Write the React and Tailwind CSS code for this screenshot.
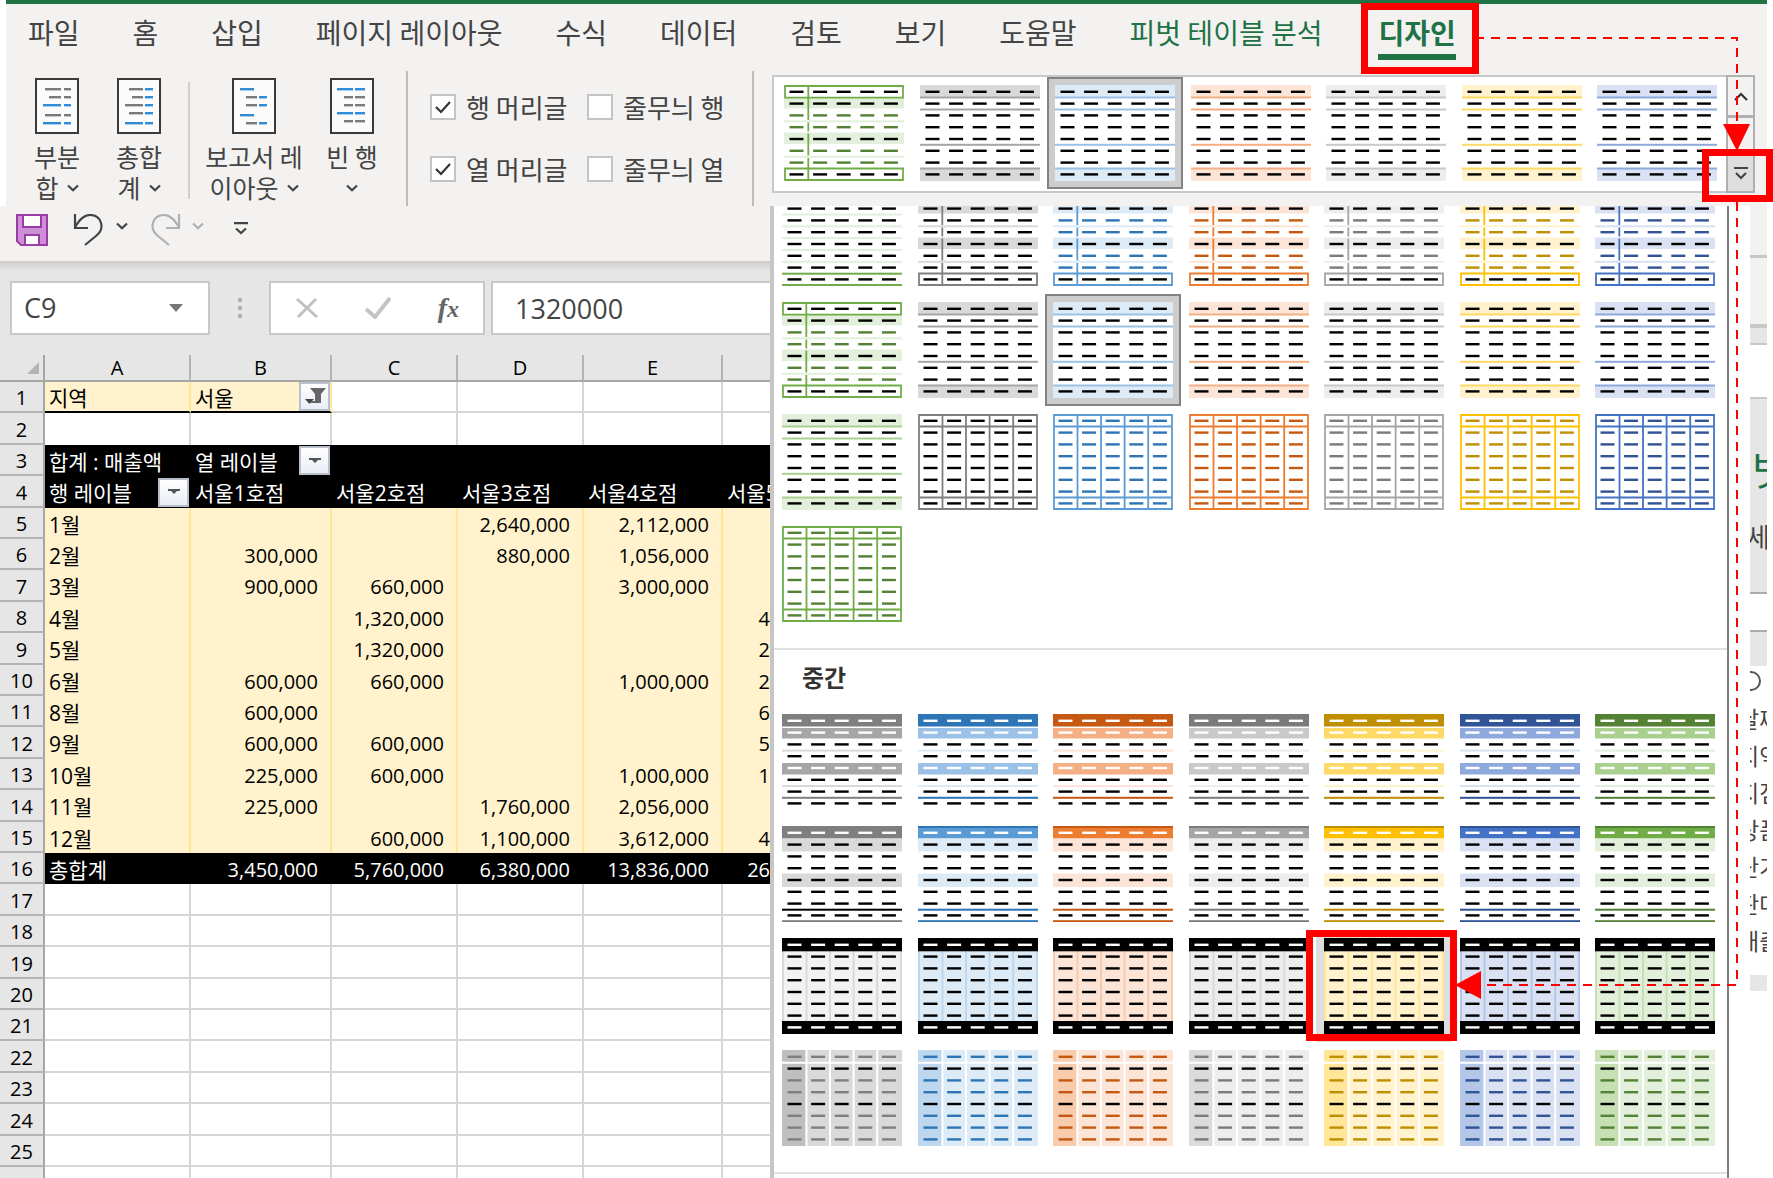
import { useState } from "react";

const palettes = {
  black: { dark: "#7f7f7f", strong: "#7f7f7f", mid: "#a6a6a6", soft: "#bfbfbf", pale: "#d9d9d9", text: "#000000" },
  blue: { dark: "#2e75b6", strong: "#5b9bd5", mid: "#9bc2e6", soft: "#bdd7ee", pale: "#ddebf7" },
  orange: { dark: "#c65911", strong: "#ed7d31", mid: "#f4b084", soft: "#f8cbad", pale: "#fce4d6" },
  gray: { dark: "#7b7b7b", strong: "#a5a5a5", mid: "#c9c9c9", soft: "#dbdbdb", pale: "#ededed" },
  yellow: { dark: "#bf8f00", strong: "#ffc000", mid: "#ffd966", soft: "#ffe699", pale: "#fff2cc" },
  navy: { dark: "#305496", strong: "#4472c4", mid: "#8ea9db", soft: "#b4c6e7", pale: "#d9e1f2" },
  green: { dark: "#548235", strong: "#70ad47", mid: "#a9d08e", soft: "#c6e0b4", pale: "#e2efda" },
};

const colorOrder = ["black", "blue", "orange", "gray", "yellow", "navy"];
const rowOf = (kind, colors) => colors.map((color) => ({ kind, color }));

const ribbonStyles = [{ kind: "outline", color: "green" }, ...rowOf("band", colorOrder)];

const lightRows = [
  [{ kind: "lines", color: "green" }, ...rowOf("outline", colorOrder)],
  ribbonStyles,
  [{ kind: "band", color: "green" }, ...rowOf("grid", colorOrder)],
  [{ kind: "grid", color: "green" }],
];

const mediumRows = ["header", "stripe", "block", "cells"].map((kind) =>
  rowOf(kind, [...colorOrder, "green"])
);

const tabs = ["파일", "홈", "삽입", "페이지 레이아웃", "수식", "데이터", "검토", "보기", "도움말"];

const columns = ["A", "B", "C", "D", "E", ""];

const sheet = [
  ["지역", "서울", "", "", "", ""],
  ["", "", "", "", "", ""],
  ["합계 : 매출액", "열 레이블", "", "", "", ""],
  ["행 레이블", "서울1호점", "서울2호점", "서울3호점", "서울4호점", "서울5호점"],
  ["1월", "", "", "2,640,000", "2,112,000", ""],
  ["2월", "300,000", "", "880,000", "1,056,000", ""],
  ["3월", "900,000", "660,000", "", "3,000,000", ""],
  ["4월", "", "1,320,000", "", "", "4"],
  ["5월", "", "1,320,000", "", "", "2"],
  ["6월", "600,000", "660,000", "", "1,000,000", "2"],
  ["8월", "600,000", "", "", "", "6"],
  ["9월", "600,000", "600,000", "", "", "5"],
  ["10월", "225,000", "600,000", "", "1,000,000", "1"],
  ["11월", "225,000", "", "1,760,000", "2,056,000", ""],
  ["12월", "", "600,000", "1,100,000", "3,612,000", "4"],
  ["총합계", "3,450,000", "5,760,000", "6,380,000", "13,836,000", "26"],
  ...Array.from({ length: 10 }, () => ["", "", "", "", "", ""]),
];

const fields = ["날짜", "지역", "지점", "상품", "단가", "판매", "매출"];

const cols = [0, 1, 2, 3, 4];
const rows = [0, 1, 2, 3, 4, 5, 6, 7];

const dashColor = (kind, row, p) => {
  const dark = p.text || p.dark;
  if (kind === "outline") return [2, 3, 5, 6].includes(row) ? dark : "#000000";
  if (kind === "grid") return dark;
  if (kind === "header") return [0, 1, 4].includes(row) ? "#ffffff" : "#000000";
  if (kind === "stripe") return row === 0 ? "#ffffff" : "#000000";
  if (kind === "block") return row === 0 || row === 7 ? "#ffffff" : "#000000";
  if (kind === "cells") return row === 1 || row === 4 ? "#000000" : p.dark;
  return "#000000";
};

const StyleBackground = ({ kind, color, p }) => {
  const line = (y, fill) => <rect key={`l${y}`} x="0" y={y - 1} width="120" height="2" fill={fill} />;
  const fillRow = (y, h, fill) => <rect key={`f${y}`} x="0" y={y} width="120" height={h} fill={fill} />;

  if (kind === "lines") {
    return <>{[12.5, 24.5, 36.3, 48, 60, 71.8].map((y) => line(y, p.pale))}{[1, 83.7, 95].map((y) => line(y, p.strong))}</>;
  }
  if (kind === "outline") {
    return (
      <>
        {fillRow(13, 10.5, p.pale)}
        {fillRow(47.5, 11.5, p.pale)}
        {line(36.3, p.pale)}
        {line(71.8, p.pale)}
        <path d="M24.3 1V35M24.3 37.5V46.5M24.3 48.5V70.5M24.3 73V95" stroke={p.strong} strokeWidth="1.8" />
        <path d="M1 1H119V12.7H1ZM1 83.5H119V95H1Z" fill="none" stroke={p.strong} strokeWidth="1.8" />
      </>
    );
  }
  if (kind === "band") {
    return (
      <>
        {fillRow(0, 12, p.pale)}
        {fillRow(84, 12, p.pale)}
        {[12.5, 24.5, 59.8, 83.5].map((y) => line(y, p.mid))}
      </>
    );
  }
  if (kind === "grid") {
    return (
      <path
        d="M1 1H119V95H1ZM1 12.5H119M1 83.5H119M24.5 1V95M48 1V95M71.6 1V95M95.2 1V95"
        fill="none"
        stroke={p.strong}
        strokeWidth="1.8"
      />
    );
  }
  if (kind === "header") {
    return (
      <>
        {fillRow(0, 12.5, p.dark)}
        {fillRow(14, 10.5, p.mid)}
        {fillRow(49, 11.5, p.mid)}
        {line(36.6, p.pale)}
        {line(72, p.pale)}
        {line(83.8, p.dark)}
      </>
    );
  }
  if (kind === "stripe") {
    return (
      <>
        {fillRow(0, 12.5, p.strong)}
        {line(1, p.dark)}
        {fillRow(12.5, 13, p.pale)}
        {fillRow(47.5, 13.5, p.pale)}
        {line(83.7, p.text || p.dark)}
        {line(95.2, p.dark)}
      </>
    );
  }
  if (kind === "block") {
    return (
      <>
        {fillRow(12, 72, color === "black" ? "#f2f2f2" : p.pale)}
        <path
          d="M1 12V84M24.5 12V84M48 12V84M71.6 12V84M95.2 12V84M119 12V84"
          stroke={color === "black" || color === "gray" ? "#d9d9d9" : p.soft}
          strokeWidth="2"
        />
        {fillRow(0, 13.3, "#000000")}
        {fillRow(83, 13.3, "#000000")}
      </>
    );
  }
  return (
    <>
      {fillRow(0, 96, p.pale)}
      <rect x="0" y="0" width="24" height="96" fill={p.soft} />
      <path d="M24.4 0V96M48 0V96M71.6 0V96M95.2 0V96M0 12.8H120" stroke="#ffffff" strokeWidth="2" />
    </>
  );
};

const StyleThumb = ({ kind, color, selected, hovered, onClick }) => {
  const p = palettes[color];
  return (
    <button
      type="button"
      onClick={onClick}
      aria-label={`${kind} ${color}`}
      className={`block h-24 w-[120px] shrink-0 ${
        selected ? "bg-white shadow-[0_0_0_6px_#cdcdcd,0_0_0_8px_#838383]" : ""
      } ${hovered ? "shadow-[0_0_0_8px_#dedede]" : ""}`}
    >
      <svg width="120" height="96" viewBox="0 0 120 96" className="block">
        <StyleBackground kind={kind} color={color} p={p} />
        {rows.map((r) =>
          cols.map((c) => (
            <rect
              key={`${r}-${c}`}
              x={5.5 + c * 23.6}
              y={5.6 + r * 11.8}
              width="14"
              height="2.4"
              fill={dashColor(kind, r, p)}
            />
          ))
        )}
      </svg>
    </button>
  );
};

const Chevron = ({ className = "text-[#444444]" }) => (
  <svg width="12" height="8" viewBox="0 0 12 8" className={`inline-block ${className}`}>
    <path d="M1 1.5L6 6.3L11 1.5" fill="none" stroke="currentColor" strokeWidth="2.2" />
  </svg>
);

// Each line is [x1, x2, y, highlighted]
const pageLines = {
  subtotal: [
    [10, 26, 10, 0], [29, 36, 10, 0], [14, 26, 18, 0], [29, 36, 18, 0], [8, 26, 26, 1],
    [29, 36, 26, 1], [10, 26, 36, 0], [29, 36, 36, 0], [8, 26, 44, 1], [29, 36, 44, 1],
  ],
  total: [
    [12, 26, 10, 0], [28, 36, 10, 1], [15, 26, 18, 0], [28, 36, 18, 1], [8, 26, 26, 0],
    [28, 36, 26, 1], [12, 26, 34, 0], [28, 36, 34, 1], [8, 26, 44, 1], [28, 36, 44, 1],
  ],
  report: [
    [8, 22, 10, 1], [14, 25, 18, 0], [27, 35, 18, 1], [14, 25, 26, 0],
    [27, 35, 26, 1], [8, 22, 36, 1], [14, 25, 44, 0], [27, 35, 44, 1],
  ],
  blank: [
    [7, 23, 10, 1], [25, 35, 10, 1], [14, 23, 18, 0], [25, 35, 18, 0], [14, 23, 26, 0],
    [25, 35, 26, 0], [7, 23, 34, 1], [25, 35, 34, 1], [14, 23, 42, 0], [25, 35, 42, 0],
  ],
};

const LayoutButton = ({ icon, first, second, className }) => (
  <button type="button" className={`flex flex-col items-center pt-[7px] text-[25px] leading-[31px] ${className}`}>
    <svg width="44" height="56" viewBox="0 0 44 56" className="mb-[7px] shrink-0">
      <rect x="1" y="1" width="42" height="54" fill="#fbfbfb" stroke="#3b3a39" strokeWidth="2" />
      {pageLines[icon].map(([x1, x2, y, hot]) => (
        <rect key={`${x1}-${y}`} x={x1} y={y} width={x2 - x1} height="2.4" fill={hot ? "#2f8bd6" : "#7a7a7a"} />
      ))}
    </svg>
    <span className="whitespace-nowrap">{first}</span>
    <span className="flex h-[31px] items-center gap-2 whitespace-nowrap">
      {second}
      <Chevron />
    </span>
  </button>
);

const StyleOption = ({ id, label, checked, onChange }) => (
  <div className="flex h-[62px] items-center gap-[10px]">
    <span className="grid">
      <input
        id={id}
        type="checkbox"
        checked={checked}
        onChange={onChange}
        className="col-start-1 row-start-1 size-[26px] appearance-none border-2 border-[#c4c4c4] bg-white"
      />
      {checked && (
        <svg viewBox="0 0 26 26" className="pointer-events-none col-start-1 row-start-1 size-[26px]">
          <path d="M6 13L11 18L20 8" fill="none" stroke="#333333" strokeWidth="2.2" />
        </svg>
      )}
    </span>
    <label htmlFor={id} className="text-[26px] leading-[30px] whitespace-nowrap">
      {label}
    </label>
  </div>
);

const FilterButton = ({ active }) => (
  <button
    type="button"
    aria-label="filter"
    className="flex h-[29px] w-[31px] items-center justify-center border-2 border-[#b9c0cc] bg-linear-to-b from-white to-[#e9edf5]"
  >
    {active ? (
      <svg width="24" height="20" viewBox="0 0 24 20">
        <path d="M7 1H23L18 7V16H12V7Z" fill="#666666" />
        <path d="M2 12H11L6.5 17Z" fill="#444444" />
        <path d="M8 14H17V16H8Z" fill="#666666" />
      </svg>
    ) : (
      <svg width="12" height="6" viewBox="0 0 12 6">
        <path d="M0 0H12V2H9L6 5L3 2H0Z" fill="#555555" />
      </svg>
    )}
  </button>
);

const hasFilter = (row, col) => (row === 0 && col === 1) || (row === 2 && col === 1) || (row === 3 && col === 0);

const cellClass = (row, col) => {
  if (row === 2 || row === 3 || row === 15) return "bg-black text-white border-r-2 border-black";
  if (row > 3 && row < 15) return "bg-[#fff2cc] border-r-2 border-[#ffe699]";
  if (row === 0 && col < 2)
    return "bg-[#fff2cc] border-r-2 border-b-2 border-r-[#ffe699] border-b-black";
  if (row === 1) return "border-r-2 border-[#d6d6d6]";
  return "border-r-2 border-b-2 border-[#d6d6d6]";
};

const Sheet = () => (
  <table className="w-full table-fixed border-separate border-spacing-0 text-black font-['Open_Sans','Noto_Sans_CJK_KR',sans-serif]">
    <colgroup>
      <col className="w-[45px]" />
      <col className="w-[146px]" />
      <col className="w-[141px]" />
      <col className="w-[126px]" />
      <col className="w-[126px]" />
      <col className="w-[139px]" />
      <col />
    </colgroup>
    <thead>
      <tr className="h-[27px] bg-[#e6e6e6]">
        <th className="border-r-2 border-b-2 border-[#a6a6a6] p-0">
          <svg width="12" height="12" viewBox="0 0 12 12" className="mr-1 ml-auto block">
            <path d="M12 0V12H0Z" fill="#b4b4b4" />
          </svg>
        </th>
        {columns.map((name) => (
          <th
            key={name}
            className="border-r-2 border-b-2 border-r-[#b4b4b4] border-b-[#a6a6a6] p-0 text-[20px] leading-[24px] font-medium last:border-r-0"
          >
            {name}
          </th>
        ))}
      </tr>
    </thead>
    <tbody>
      {sheet.map((cells, r) => (
        <tr key={r} className={r % 5 === 1 || r % 5 === 3 ? "h-8" : "h-[31px]"}>
          <th className="border-r-2 border-b-2 border-r-[#a6a6a6] border-b-[#b4b4b4] bg-[#e6e6e6] p-0 pt-[3px] text-[20px] leading-[24px] font-medium">
            {r < 25 ? r + 1 : ""}
          </th>
          {cells.map((value, c) => (
            <td key={c} className={`overflow-hidden p-0 leading-[24px] whitespace-nowrap last:border-r-0 ${cellClass(r, c)}`}>
              {c > 0 && r > 3 ? (
                <div className={`pt-[2px] text-right text-[20px] ${c < 5 ? "pr-3" : ""}`}>{value}</div>
              ) : (
                <div className="flex items-center justify-between pl-1 text-[21px]">
                  <span className="pt-[2px]">{value}</span>
                  {hasFilter(r, c) && <FilterButton active={r === 0} />}
                </div>
              )}
            </td>
          ))}
        </tr>
      ))}
    </tbody>
  </table>
);

const QuickAccess = () => (
  <div className="flex h-[55px] shrink-0 items-start bg-[#f3f2f1] pt-2 pl-4">
    <button type="button" aria-label="save">
      <svg width="32" height="32" viewBox="0 0 32 32">
        <path d="M1 1H31V31H5L1 27Z" fill="#cf8fd6" stroke="#9b3ba6" strokeWidth="2" />
        <path d="M7 1H25V13H7Z" fill="#ffffff" stroke="#9b3ba6" strokeWidth="2" />
        <path d="M9 31V21H23V31Z" fill="#ffffff" stroke="#9b3ba6" strokeWidth="2" />
      </svg>
    </button>
    <button type="button" aria-label="undo" className="ml-6 flex gap-3">
      <svg width="32" height="32" viewBox="0 0 32 32">
        <path d="M3 0V14H16" fill="none" stroke="#444444" strokeWidth="2.2" />
        <path d="M3 13C8 5 12 1 18 1C29 1 34 14 24 22L13 31" fill="none" stroke="#444444" strokeWidth="2.2" />
      </svg>
      <Chevron className="mt-2 text-[#444444]" />
    </button>
    <button type="button" aria-label="redo" className="ml-[22px] flex gap-[10px]">
      <svg width="32" height="32" viewBox="0 0 32 32" className="text-[#b0b0b0]">
        <path d="M29 0V14H16" fill="none" stroke="currentColor" strokeWidth="2.2" />
        <path d="M29 13C24 5 20 1 14 1C3 1 -2 14 8 22L19 31" fill="none" stroke="currentColor" strokeWidth="2.2" />
      </svg>
      <Chevron className="mt-2 text-[#b0b0b0]" />
    </button>
    <button type="button" aria-label="customize" className="mt-2 ml-[30px]">
      <svg width="14" height="13" viewBox="0 0 14 13">
        <path d="M0 1.2H14M2 6.5L7 11L12 6.5" fill="none" stroke="#444444" strokeWidth="2.2" />
      </svg>
    </button>
  </div>
);

const FormulaBar = () => {
  const [formula, setFormula] = useState("1320000");
  return (
    <div className="shrink-0 bg-[#e6e6e6] text-[#444444]">
      <div className="h-[9px] bg-linear-to-b from-[#cdcccb] to-[#e3e2e1]" />
      <div className="flex h-[85px] items-start pt-[11px] pl-[10px] font-['Open_Sans','Noto_Sans_CJK_KR',sans-serif] text-[27px]">
        <div className="flex h-[54px] w-[200px] items-center border-2 border-[#c8c8c8] bg-white px-3">
          <input aria-label="name box" defaultValue="C9" className="w-full min-w-0 outline-none" />
          <button type="button" aria-label="names" className="mr-[13px] shrink-0">
            <svg width="14" height="8" viewBox="0 0 14 8" className="block">
              <path d="M0 0H14L7 8Z" fill="#777777" />
            </svg>
          </button>
        </div>
        <div className="flex h-[54px] w-[59px] flex-col items-center justify-center gap-1">
          <span className="size-1 bg-[#b0b0b0]" />
          <span className="size-1 bg-[#b0b0b0]" />
          <span className="size-1 bg-[#b0b0b0]" />
        </div>
        <div className="flex h-[54px] w-[216px] items-center justify-between border-2 border-[#c8c8c8] bg-white pr-6 pl-6">
          <button type="button" aria-label="cancel">
            <svg width="24" height="22" viewBox="0 0 24 22">
              <path d="M2 2L22 20M21 2L3 20" stroke="#c0c0c0" strokeWidth="3" />
            </svg>
          </button>
          <button type="button" aria-label="enter">
            <svg width="26" height="22" viewBox="0 0 26 22">
              <path d="M1 12L10 20L25 1" fill="none" stroke="#c4c4c4" strokeWidth="4" />
            </svg>
          </button>
          <button type="button" className="font-['Liberation_Serif',serif] text-[28px] leading-[30px] font-bold text-[#666666] italic">
            f<sub className="bottom-0 text-[24px]">x</sub>
          </button>
        </div>
        <input
          aria-label="formula"
          value={formula}
          onChange={(e) => setFormula(e.target.value)}
          className="ml-[6px] h-[54px] min-w-0 flex-1 border-2 border-r-0 border-[#c8c8c8] bg-white pl-[22px] outline-none"
        />
      </div>
    </div>
  );
};

const Ribbon = () => {
  const [options, setOptions] = useState({ rowHead: true, rowBand: false, colHead: true, colBand: false });
  const toggle = (name) => () => setOptions({ ...options, [name]: !options[name] });

  return (
    <header className="mx-[6px] flex h-[206px] shrink-0 flex-col border-t-4 border-[#217346] bg-[#f3f2f1] text-[#444444]">
      <nav className="flex h-[67px] shrink-0 items-start gap-[53px] pt-2 pl-[22px] text-[28px] leading-[40px] whitespace-nowrap">
        {tabs.map((tab) => (
          <a key={tab} href="#tab">
            {tab}
          </a>
        ))}
        <div className="flex gap-14 text-[#217346]">
          <a href="#analyze">피벗 테이블 분석</a>
          <a href="#design" className="border-b-6 border-[#217346] pb-[2px] font-bold">
            디자인
          </a>
        </div>
      </nav>
      <div className="flex min-h-0 flex-1">
        <LayoutButton icon="subtotal" first="부분" second="합" className="w-[102px]" />
        <LayoutButton icon="total" first="총합" second="계" className="-ml-[10px] w-[82px]" />
        <div className="mt-[11px] ml-2 h-[117px] w-[2px] bg-[#d0cfce]" />
        <LayoutButton icon="report" first="보고서 레" second="이아웃" className="ml-[7px] w-[114px]" />
        <LayoutButton icon="blank" first="빈 행" second="" className="w-[82px]" />
        <div className="ml-[13px] w-[2px] bg-[#bdbcbb]" />
        <div className="ml-[22px] grid w-[322px] grid-cols-[157px_1fr] content-start pt-[5px]">
          <StyleOption id="rowHead" label="행 머리글" checked={options.rowHead} onChange={toggle("rowHead")} />
          <StyleOption id="rowBand" label="줄무늬 행" checked={options.rowBand} onChange={toggle("rowBand")} />
          <StyleOption id="colHead" label="열 머리글" checked={options.colHead} onChange={toggle("colHead")} />
          <StyleOption id="colBand" label="줄무늬 열" checked={options.colBand} onChange={toggle("colBand")} />
        </div>
        <div className="w-[2px] bg-[#bdbcbb]" />
        <div className="mt-1 mr-3 ml-[18px] flex h-[118px] flex-1">
          <div className="flex flex-1 items-center justify-between border-2 border-r-0 border-[#c8c8c8] bg-white pr-[9px] pb-[2px] pl-[10px]">
            {ribbonStyles.map((style, i) => (
              <StyleThumb key={i} {...style} selected={i === 2} />
            ))}
          </div>
          <div className="flex w-[29px] flex-col border-2 border-[#b0b0b0]">
            <button type="button" aria-label="scroll up" className="flex h-[38px] items-center justify-center">
              <svg width="14" height="9" viewBox="0 0 14 9">
                <path d="M1 8L7 2L13 8" fill="none" stroke="#333333" strokeWidth="2.2" />
              </svg>
            </button>
            <button type="button" aria-label="scroll down" className="h-[38px] border-t-3 border-[#b0b0b0]" />
            <button
              type="button"
              aria-label="more styles"
              className="flex flex-1 items-center justify-center border-t-2 border-[#b0b0b0] bg-[#dededd]"
            >
              <svg width="14" height="14" viewBox="0 0 14 14">
                <path d="M0 2H14M2 7L7 12L12 7" fill="none" stroke="#444444" strokeWidth="2.2" />
              </svg>
            </button>
          </div>
        </div>
      </div>
    </header>
  );
};

const StyleGallery = () => {
  const [selected, setSelected] = useState("light-1-2");
  return (
    <section className="min-w-0 flex-1 overflow-hidden border-r-2 border-l-4 border-r-[#7f7f7f] border-l-[#c6c6c6] bg-white">
      <div className="-mt-4 flex flex-col gap-4 pr-3 pl-2">
        {lightRows.map((row, r) => (
          <div key={r} className="flex justify-between">
            {row.map((style, c) => (
              <StyleThumb
                key={c}
                {...style}
                selected={selected === `light-${r}-${c}`}
                onClick={() => setSelected(`light-${r}-${c}`)}
              />
            ))}
          </div>
        ))}
      </div>
      <div className="mt-[26px] border-t-2 border-[#e1e1e1]" />
      <h2 className="h-16 pt-[10px] pl-[28px] text-[24px] leading-[34px] font-bold text-[#333333]">중간</h2>
      <div className="flex flex-col gap-4 pr-3 pl-2">
        {mediumRows.map((row, r) => (
          <div key={r} className="flex justify-between">
            {row.map((style, c) => (
              <StyleThumb
                key={c}
                {...style}
                selected={selected === `medium-${r}-${c}`}
                hovered={r === 2 && c === 4}
                onClick={() => setSelected(`medium-${r}-${c}`)}
              />
            ))}
          </div>
        ))}
      </div>
      <div className="mt-[26px] border-t-2 border-[#e1e1e1]" />
    </section>
  );
};

// The part of the field list pane that stays visible beside the gallery
const FieldPane = () => (
  <aside className="mr-[6px] ml-[21px] w-[17px] shrink-0 overflow-hidden text-[#444444]">
    <div className="h-[49px] bg-[#f3f2f1]" />
    <div className="h-[69px] border-t-3 border-[#c6c6c6] bg-[#f3f2f1]" />
    <div className="h-[19px] border-t-4 border-[#c9c8c7] bg-[#e6e6e6]" />
    <div className="h-14 border-y-2 border-[#c8c8c8] bg-white" />
    <div className="h-[195px] overflow-hidden border-b-2 border-[#ababab] bg-[#e6e6e6] pt-[44px] whitespace-nowrap">
      <p className="pl-[2px] text-[40px] leading-[50px] text-[#217346]">벗</p>
      <p className="-ml-1 pt-[23px] text-[26px] leading-[40px]">세</p>
    </div>
    <div className="h-[36px]" />
    <div className="h-[36px] border-t-2 border-[#ababab] bg-[#e6e6e6]" />
    <div className="h-[309px]">
      <svg width="17" height="34" viewBox="0 0 17 34" className="block">
        <circle cx="1" cy="15" r="9" fill="none" stroke="#555555" strokeWidth="2" />
      </svg>
      {fields.map((field, i) => (
        <p key={i} className="-ml-3 h-[37px] text-[23px] leading-[37px] whitespace-nowrap">
          {field}
        </p>
      ))}
    </div>
    <div className="h-4 bg-[#e6e6e6]" />
  </aside>
);

// Red boxes and arrows that lead from the tab to the chosen style
const Callouts = () => (
  <svg width="1773" height="1178" viewBox="0 0 1773 1178" className="pointer-events-none absolute top-0 left-0">
    <g fill="none" stroke="#ff0000">
      <rect x="1364.5" y="6.5" width="111" height="64" strokeWidth="7" />
      <rect x="1705.5" y="152.5" width="64" height="46" strokeWidth="7" />
      <rect x="1309.5" y="933.5" width="144" height="104" strokeWidth="7" />
      <path d="M1475 38H1737V126" strokeWidth="2" strokeDasharray="9 7" />
      <path d="M1737 202V985H1480" strokeWidth="2" strokeDasharray="9 7" />
    </g>
    <path d="M1723 124H1750L1737 151ZM1481 971V999L1455 985Z" fill="#ff0000" />
  </svg>
);

const App = () => {
  return (
    <div className="relative flex h-screen flex-col overflow-hidden bg-white font-['Noto_Sans_CJK_KR',sans-serif]">
      <Ribbon />
      <main className="flex min-h-0 flex-1">
        <div className="flex w-[770px] shrink-0 flex-col overflow-hidden">
          <QuickAccess />
          <FormulaBar />
          <Sheet />
        </div>
        <StyleGallery />
        <FieldPane />
      </main>
      <Callouts />
    </div>
  );
};

export default App;
